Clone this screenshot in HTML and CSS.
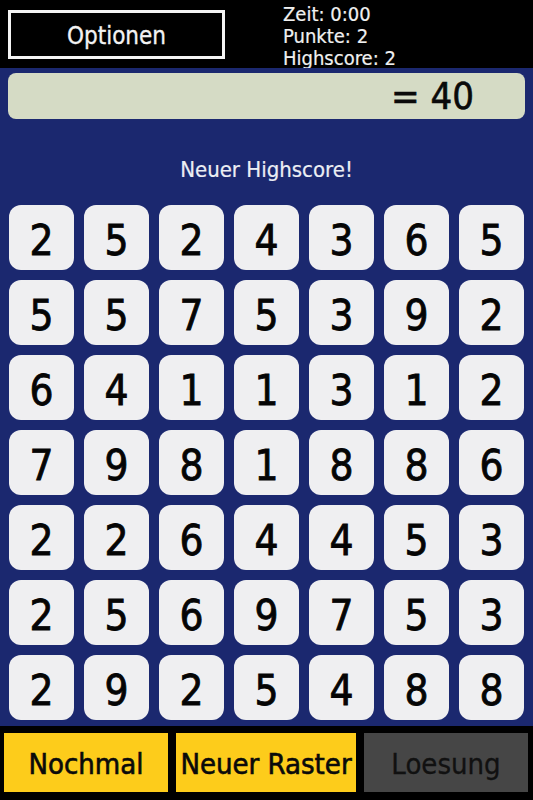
FILE: index.html
```html
<!DOCTYPE html>
<html lang="de">
<head>
<meta charset="utf-8">
<title>Rechenraster</title>
<link rel="stylesheet" href="styles.css">
</head>
<body>
<div class="app">
  <header class="topbar">
    <div class="options-btn"><span class="options-label">Optionen</span></div>
    <div class="stats">
      <div>Zeit: 0:00</div>
      <div>Punkte: 2</div>
      <div>Highscore: 2</div>
    </div>
  </header>
  <main class="board">
    <div class="result">= 40</div>
    <div class="message">Neuer Highscore!</div>
    <div class="grid">
      <div class="tile">2</div><div class="tile">5</div><div class="tile">2</div><div class="tile">4</div><div class="tile">3</div><div class="tile">6</div><div class="tile">5</div>
      <div class="tile">5</div><div class="tile">5</div><div class="tile">7</div><div class="tile">5</div><div class="tile">3</div><div class="tile">9</div><div class="tile">2</div>
      <div class="tile">6</div><div class="tile">4</div><div class="tile">1</div><div class="tile">1</div><div class="tile">3</div><div class="tile">1</div><div class="tile">2</div>
      <div class="tile">7</div><div class="tile">9</div><div class="tile">8</div><div class="tile">1</div><div class="tile">8</div><div class="tile">8</div><div class="tile">6</div>
      <div class="tile">2</div><div class="tile">2</div><div class="tile">6</div><div class="tile">4</div><div class="tile">4</div><div class="tile">5</div><div class="tile">3</div>
      <div class="tile">2</div><div class="tile">5</div><div class="tile">6</div><div class="tile">9</div><div class="tile">7</div><div class="tile">5</div><div class="tile">3</div>
      <div class="tile">2</div><div class="tile">9</div><div class="tile">2</div><div class="tile">5</div><div class="tile">4</div><div class="tile">8</div><div class="tile">8</div>
    </div>
  </main>
  <footer class="bottombar">
    <div class="btn btn-yellow btn-narrow">Nochmal</div>
    <div class="btn btn-yellow btn-wide">Neuer Raster</div>
    <div class="btn btn-grey btn-narrow">Loesung</div>
  </footer>
</div>
</body>
</html>
```
FILE: styles.css
```css
html, body {
  margin: 0;
  padding: 0;
  background: #000;
}

body {
  font-family: "DejaVu Sans Condensed", "DejaVu Sans", sans-serif;
  font-stretch: condensed;
}

.app {
  width: 533px;
  height: 800px;
  display: flex;
  flex-direction: column;
  overflow: hidden;
}

/* Top bar */
.topbar {
  height: 68px;
  flex: 0 0 68px;
  background: #000;
  display: flex;
  align-items: flex-start;
  overflow: hidden;
}

.options-btn {
  margin: 10px 0 0 8px;
  width: 217px;
  height: 49px;
  box-sizing: border-box;
  border: 3px solid #f4f4f4;
  text-align: center;
  color: #f2f2f2;
  font-size: 24px;
  line-height: 47px;
  -webkit-text-stroke: 0.3px #f2f2f2;
}

.stats {
  margin-left: 58px;
  padding-top: 4px;
  color: #f0f0f0;
  font-size: 20px;
  line-height: 21.8px;
  white-space: nowrap;
  -webkit-text-stroke: 0.2px #f0f0f0;
}

/* Board */
.board {
  flex: 1 1 auto;
  background: #1b286f;
  display: flex;
  flex-direction: column;
}

.result {
  margin: 5px 0 0 8px;
  width: 517px;
  height: 46px;
  box-sizing: border-box;
  background: #d5dbc5;
  border-radius: 8px;
  text-align: right;
  padding-right: 51px;
  font-size: 38px;
  line-height: 46px;
  color: #0a0a0a;
  -webkit-text-stroke: 0.6px #0a0a0a;
}

.message {
  margin: 39px 0 23px;
  text-align: center;
  color: #eceef4;
  font-size: 22px;
  line-height: 24px;
  -webkit-text-stroke: 0.2px #eceef4;
}

.grid {
  display: grid;
  grid-template-columns: repeat(7, 65px);
  grid-auto-rows: 65px;
  gap: 10px;
  padding-left: 9px;
}

.tile {
  background: #efeff1;
  border-radius: 12px;
  text-align: center;
  font-size: 42px;
  line-height: 72px;
  height: 65px;
  color: #050505;
  -webkit-text-stroke: 0.8px #050505;
}

/* Bottom bar */
.bottombar {
  flex: 0 0 74px;
  height: 74px;
  box-sizing: border-box;
  background: #000;
  display: flex;
  gap: 8px;
  padding: 7px 0 0 4px;
}

.btn {
  height: 59px;
  text-align: center;
  font-size: 29px;
  line-height: 62px;
  color: #0a0a0a;
  white-space: nowrap;
  overflow: hidden;
}

.btn-narrow { width: 164px; }
.btn-wide { width: 180px; }

.btn-yellow {
  background: #fdcc1b;
  -webkit-text-stroke: 0.6px #0a0a0a;
}

.btn-grey {
  background: #464646;
  color: #111;
  -webkit-text-stroke: 0.3px #111;
}
```
